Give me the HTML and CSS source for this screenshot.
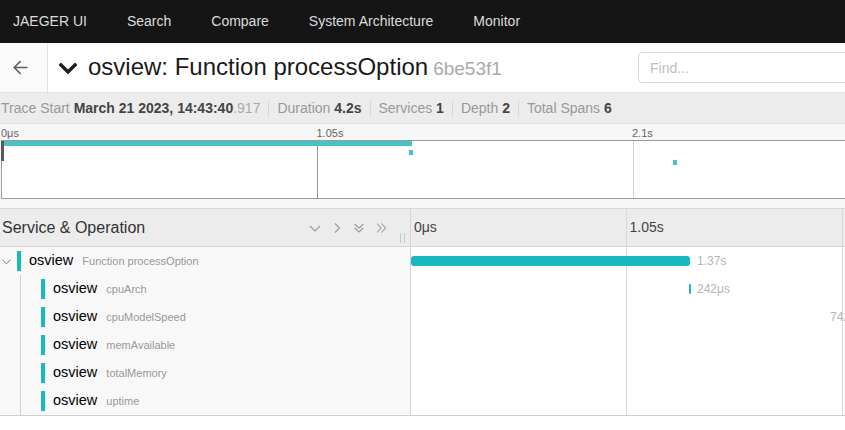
FILE: index.html
```html
<!DOCTYPE html>
<html lang="en">
<head>
<meta charset="utf-8">
<title>Jaeger UI – osview: Function processOption</title>
<link rel="stylesheet" href="styles.css">
</head>
<body>
<div class="page">
  <nav class="topnav">
    <a class="nav-item">JAEGER UI</a>
    <a class="nav-item">Search</a>
    <a class="nav-item">Compare</a>
    <a class="nav-item">System Architecture</a>
    <a class="nav-item">Monitor</a>
  </nav>

  <header class="trace-header">
    <a class="back-btn" aria-label="Back">
      <svg width="15" height="15" viewBox="0 0 15 15"><path d="M14.5 7.5H1.2M7.6 1.1L1.2 7.5l6.4 6.4" fill="none" stroke="#5f5f5f" stroke-width="1.5"/></svg>
    </a>
    <div class="title-area">
      <svg class="title-chevron" width="20" height="12" viewBox="0 0 20 12"><path d="M1.8 1.8L10 10L18.2 1.8" fill="none" stroke="#1f1f1f" stroke-width="3.4"/></svg>
      <h1 class="title">osview: Function processOption<span class="trace-id">6be53f1</span></h1>
    </div>
    <div class="header-right">
      <input class="find" type="text" placeholder="Find...">
    </div>
  </header>

  <div class="summary">
    <span class="s-item first"><span class="s-label">Trace Start</span> <b>March 21 2023, 14:43:40</b><span class="s-ms">.917</span></span>
    <span class="s-item"><span class="s-label">Duration</span> <b>4.2s</b></span>
    <span class="s-item"><span class="s-label">Services</span> <b>1</b></span>
    <span class="s-item"><span class="s-label">Depth</span> <b>2</b></span>
    <span class="s-item"><span class="s-label">Total Spans</span> <b>6</b></span>
  </div>

  <section class="minimap">
    <div class="mm-ticks">
      <span class="mm-tick" style="left:0%">0μs</span>
      <span class="mm-tick" style="left:25%">1.05s</span>
      <span class="mm-tick" style="left:50%">2.1s</span>
    </div>
    <div class="mm-canvas">
      <span class="mm-bar" style="left:0;top:0;width:410px"></span>
      <span class="mm-bar" style="left:407px;top:9px;width:4px"></span>
      <span class="mm-bar" style="left:671px;top:19px;width:4px"></span>
      <span class="mm-bar" style="left:901px;top:28px;width:4px"></span>
      <span class="mm-bar" style="left:1082px;top:38px;width:4px"></span>
      <span class="mm-bar" style="left:1256px;top:47px;width:4px"></span>
      <span class="mm-handle"></span>
    </div>
  </section>

  <section class="detail">
    <div class="detail-header">
      <div class="dh-left">
        <span class="dh-title">Service &amp; Operation</span>
        <span class="dh-tools">
          <svg width="12" height="12" viewBox="0 0 12 12"><path d="M1 4l5 5 5-5" class="ico"/></svg>
          <svg width="12" height="12" viewBox="0 0 12 12"><path d="M4 1.5l4.5 4.5L4 10.5" class="ico"/></svg>
          <svg width="12" height="12" viewBox="0 0 12 12"><path d="M1.5 2l4.5 4 4.5-4M1.5 6l4.5 4 4.5-4" class="ico"/></svg>
          <svg width="12" height="12" viewBox="0 0 12 12"><path d="M2 1.5l4 4.5-4 4.5M6.5 1.5l4 4.5-4 4.5" class="ico"/></svg>
        </span>
        <span class="resizer"></span>
      </div>
      <div class="dh-right tl-grid">
        <span class="dh-tick" style="left:0%">0μs</span>
        <span class="dh-tick" style="left:25%">1.05s</span>
      </div>
    </div>

    <div class="rows">
      <div class="row">
        <div class="row-left">
          <span class="toggle"><svg width="9" height="6" viewBox="0 0 9 6"><path d="M0.5 0.8l4 4 4-4" fill="none" stroke="#777" stroke-width="1"/></svg></span>
          <span class="svc-bar"></span>
          <span class="names"><span class="svc">osview</span><span class="op">Function processOption</span></span>
        </div>
        <div class="row-tl tl-grid">
          <span class="tl-bar" style="left:0;width:279px"></span>
          <span class="tl-label" style="left:286px">1.37s</span>
        </div>
      </div>
      <div class="row">
        <div class="row-left">
          <span class="indent"></span>
          <span class="svc-bar child"></span>
          <span class="names"><span class="svc">osview</span><span class="op">cpuArch</span></span>
        </div>
        <div class="row-tl tl-grid">
          <span class="tl-bar" style="left:278px;width:2px"></span>
          <span class="tl-label" style="left:286px">242μs</span>
        </div>
      </div>
      <div class="row">
        <div class="row-left">
          <span class="indent"></span>
          <span class="svc-bar child"></span>
          <span class="names"><span class="svc">osview</span><span class="op">cpuModelSpeed</span></span>
        </div>
        <div class="row-tl tl-grid">
          <span class="tl-label" style="left:419px">742μs</span>
          <span class="tl-bar" style="left:458px;width:2px"></span>
        </div>
      </div>
      <div class="row">
        <div class="row-left">
          <span class="indent"></span>
          <span class="svc-bar child"></span>
          <span class="names"><span class="svc">osview</span><span class="op">memAvailable</span></span>
        </div>
        <div class="row-tl tl-grid">
          <span class="tl-bar" style="left:616px;width:2px"></span>
        </div>
      </div>
      <div class="row">
        <div class="row-left">
          <span class="indent"></span>
          <span class="svc-bar child"></span>
          <span class="names"><span class="svc">osview</span><span class="op">totalMemory</span></span>
        </div>
        <div class="row-tl tl-grid">
          <span class="tl-bar" style="left:740px;width:2px"></span>
        </div>
      </div>
      <div class="row">
        <div class="row-left">
          <span class="indent"></span>
          <span class="svc-bar child"></span>
          <span class="names"><span class="svc">osview</span><span class="op">uptime</span></span>
        </div>
        <div class="row-tl tl-grid">
          <span class="tl-bar" style="left:858px;width:2px"></span>
        </div>
      </div>
    </div>
  </section>
</div>
</body>
</html>
```

FILE: styles.css
```css
html, body {
  margin: 0;
  padding: 0;
  overflow: hidden;
  background: #fff;
}

body {
  font-family: "Liberation Sans", Arial, sans-serif;
  color: #222;
}

.page {
  width: 1273px;
}

/* ---------- top navigation ---------- */
.topnav {
  height: 43px;
  box-sizing: border-box;
  padding-bottom: 2px;
  background: #151515;
  display: flex;
  align-items: center;
  padding-left: 13px;
  gap: 40px;
  font-size: 14px;
}

.nav-item {
  color: rgba(255, 255, 255, 0.86);
  text-decoration: none;
  white-space: nowrap;
}

/* ---------- trace header ---------- */
.trace-header {
  height: 50px;
  box-sizing: border-box;
  border-bottom: 1px solid #e3e3e3;
  display: flex;
  align-items: stretch;
}

.back-btn {
  width: 48px;
  flex: none;
  box-sizing: border-box;
  border-right: 1px solid #e3e3e3;
  background: #fafafa;
  display: flex;
  align-items: center;
  padding-left: 13px;
}

.back-btn svg {
  display: block;
}

.title-area {
  flex: 1;
  display: flex;
  align-items: center;
  padding-left: 10px;
  min-width: 0;
}

.title-chevron {
  display: block;
  flex: none;
}

.title {
  margin: 0 0 0 10px;
  font-size: 24px;
  font-weight: normal;
  color: #1a1a1a;
  white-space: nowrap;
  line-height: 28px;
}

.trace-id {
  margin-left: 5px;
  font-size: 19px;
  color: #aaa;
}

.header-right {
  width: 635px;
  flex: none;
  display: flex;
  align-items: center;
}

.find {
  width: 260px;
  height: 31px;
  box-sizing: border-box;
  border: 1px solid #d9d9d9;
  border-radius: 4px;
  padding: 0 11px;
  font: 14px "Liberation Sans", Arial, sans-serif;
  color: #333;
  outline: none;
}

.find::placeholder {
  color: #bfbfbf;
}

/* ---------- summary ---------- */
.summary {
  height: 31px;
  box-sizing: border-box;
  background: #ececec;
  border-bottom: 1px solid #e0e0e0;
  display: flex;
  align-items: center;
  padding-left: 1px;
  font-size: 14px;
  white-space: nowrap;
}

.s-item {
  padding: 0 8px 0 8px;
  border-left: 1px solid #d9d9d9;
  line-height: 17px;
}

.s-item.first {
  padding-left: 0;
  border-left: none;
}

.s-label {
  color: #999;
}

.s-item b {
  color: #444;
}

.s-ms {
  color: #aaa;
}

/* ---------- minimap ---------- */
.minimap {
  height: 84px;
  background: #f7f7f7;
}

.mm-ticks {
  position: relative;
  height: 16px;
  width: 1262px;
  margin-left: 1px;
  font-size: 11px;
  line-height: 16px;
  color: #666;
}

.mm-tick {
  position: absolute;
  top: 1px;
  white-space: nowrap;
}

.mm-canvas {
  position: relative;
  width: 1264px;
  height: 59px;
  margin-left: 1px;
  box-sizing: border-box;
  border: 1px solid #9a9a9a;
  background-color: #fff;
  background-image:
    linear-gradient(#9a9a9a, #9a9a9a),
    linear-gradient(#cfcfcf, #cfcfcf),
    linear-gradient(#cfcfcf, #cfcfcf);
  background-size: 1px 100%;
  background-repeat: no-repeat;
  background-position: 25% 0, 50% 0, 75% 0;
}

.mm-bar {
  position: absolute;
  height: 5px;
  background: #47c3c6;
}

.mm-handle {
  position: absolute;
  left: -1px;
  top: 0;
  width: 3px;
  height: 20px;
  background: #595959;
}

/* ---------- trace detail ---------- */
.tl-grid {
  background-image:
    linear-gradient(#d9d9d9, #d9d9d9),
    linear-gradient(#d9d9d9, #d9d9d9),
    linear-gradient(#d9d9d9, #d9d9d9);
  background-size: 1px 100%;
  background-repeat: no-repeat;
  background-position: 25% 0, 50% 0, 75% 0;
}

.detail-header {
  display: flex;
  height: 39px;
  box-sizing: border-box;
  border-top: 1px solid #d9d9d9;
  border-bottom: 1px solid #d4d4d4;
  background-color: #ececec;
}

.dh-left {
  width: 411px;
  flex: none;
  box-sizing: border-box;
  border-right: 1px solid #d4d4d4;
  display: flex;
  align-items: center;
  padding: 0 23px 0 2px;
  position: relative;
}

.dh-title {
  flex: 1;
  font-size: 16px;
  color: #333;
  white-space: nowrap;
}

.dh-tools {
  display: flex;
  gap: 10px;
  align-items: center;
}

.dh-tools svg {
  display: block;
}

.ico {
  fill: none;
  stroke: #9a9a9a;
  stroke-width: 1.1;
}

.resizer {
  position: absolute;
  right: 5px;
  top: 24px;
  width: 3px;
  height: 10px;
  border-left: 1px solid #c8c8c8;
  border-right: 1px solid #c8c8c8;
}

.dh-right {
  flex: 1;
  position: relative;
}

.dh-tick {
  position: absolute;
  top: 0;
  line-height: 37px;
  padding-left: 3px;
  font-size: 14px;
  color: #444;
  white-space: nowrap;
}

.rows {
  border-bottom: 1px solid #cfcfcf;
}

.row {
  display: flex;
  height: 28px;
}

.row-left {
  width: 411px;
  flex: none;
  box-sizing: border-box;
  border-right: 1px solid #d4d4d4;
  background: #f8f8f8;
  display: flex;
  align-items: center;
  white-space: nowrap;
}

.toggle {
  width: 17px;
  flex: none;
  box-sizing: border-box;
  padding: 1px 0 0 2px;
  display: flex;
  align-items: center;
}

.toggle svg {
  display: block;
}

.indent {
  width: 21px;
  flex: none;
  align-self: stretch;
  box-sizing: border-box;
  border-right: 1px solid #cfcfcf;
}

.svc-bar {
  width: 4px;
  height: 20px;
  flex: none;
  background: #17b8be;
}

.svc-bar.child {
  margin-left: 20px;
}

.names {
  margin-left: 8px;
  display: flex;
  align-items: baseline;
  margin-top: -2px;
}

.svc {
  font-size: 14.5px;
  color: #000;
}

.op {
  margin-left: 9px;
  font-size: 11px;
  color: #999;
}

.row-tl {
  flex: 1;
  position: relative;
  overflow: hidden;
}

.tl-bar {
  position: absolute;
  top: 9px;
  height: 10px;
  background: #17b8be;
  border-radius: 3px;
}

.tl-label {
  position: absolute;
  top: 0;
  line-height: 28px;
  font-size: 12px;
  color: #b5b5b5;
  white-space: nowrap;
}
```
